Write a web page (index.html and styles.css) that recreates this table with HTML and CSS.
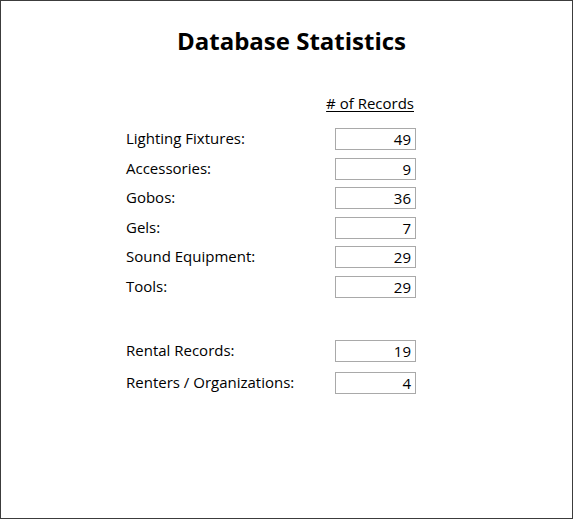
FILE: index.html
```html
<!DOCTYPE html>
<html>
<head>
<meta charset="utf-8">
<link rel="stylesheet" href="styles.css">
</head>
<body>
<div class="frame">
  <h1 class="title">Database Statistics</h1>
  <div class="table">
    <div class="head"><span class="head-label"># of Records</span></div>
    <div class="group">
      <div class="row"><span class="label">Lighting Fixtures:</span><span class="box">49</span></div>
      <div class="row"><span class="label">Accessories:</span><span class="box">9</span></div>
      <div class="row"><span class="label">Gobos:</span><span class="box">36</span></div>
      <div class="row"><span class="label">Gels:</span><span class="box">7</span></div>
      <div class="row"><span class="label">Sound Equipment:</span><span class="box">29</span></div>
      <div class="row"><span class="label">Tools:</span><span class="box">29</span></div>
    </div>
    <div class="group group-second">
      <div class="row"><span class="label">Rental Records:</span><span class="box">19</span></div>
      <div class="row"><span class="label">Renters / Organizations:</span><span class="box">4</span></div>
    </div>
  </div>
</div>
</body>
</html>
```

FILE: styles.css
```css
html, body {
  margin: 0;
  padding: 0;
  background: #ffffff;
}

.frame {
  width: 573px;
  height: 519px;
  box-sizing: border-box;
  border: 1px solid #3c3c3c;
  font-family: "Open Sans", "Noto Sans", sans-serif;
  color: #000;
}

.title {
  margin: 0;
  padding-top: 23px;
  padding-left: 10px;
  text-align: center;
  font-size: 24px;
  line-height: 34px;
  font-weight: 700;
}

.table {
  width: 290px;
  margin-left: 125px;
  padding-top: 34px;
}

.head {
  display: flex;
  justify-content: flex-end;
  padding-right: 2px;
  height: 22px;
  align-items: center;
}

.head-label {
  font-size: 15px;
  text-decoration: underline;
  text-underline-offset: 2px;
}

.group {
  display: flex;
  flex-direction: column;
  gap: 7.6px;
  margin-top: 14px;
}

.group-second {
  margin-top: 42px;
  gap: 10px;
}

.row {
  display: grid;
  grid-template-columns: 209px 81px;
  align-items: center;
  height: 22px;
}

.label {
  font-size: 15px;
  line-height: 20px;
  margin-top: -2px;
}

.box {
  box-sizing: border-box;
  height: 22px;
  border: 1px solid #a9a9a9;
  text-align: right;
  padding-right: 4px;
  font-size: 15px;
  line-height: 20px;
}
```
